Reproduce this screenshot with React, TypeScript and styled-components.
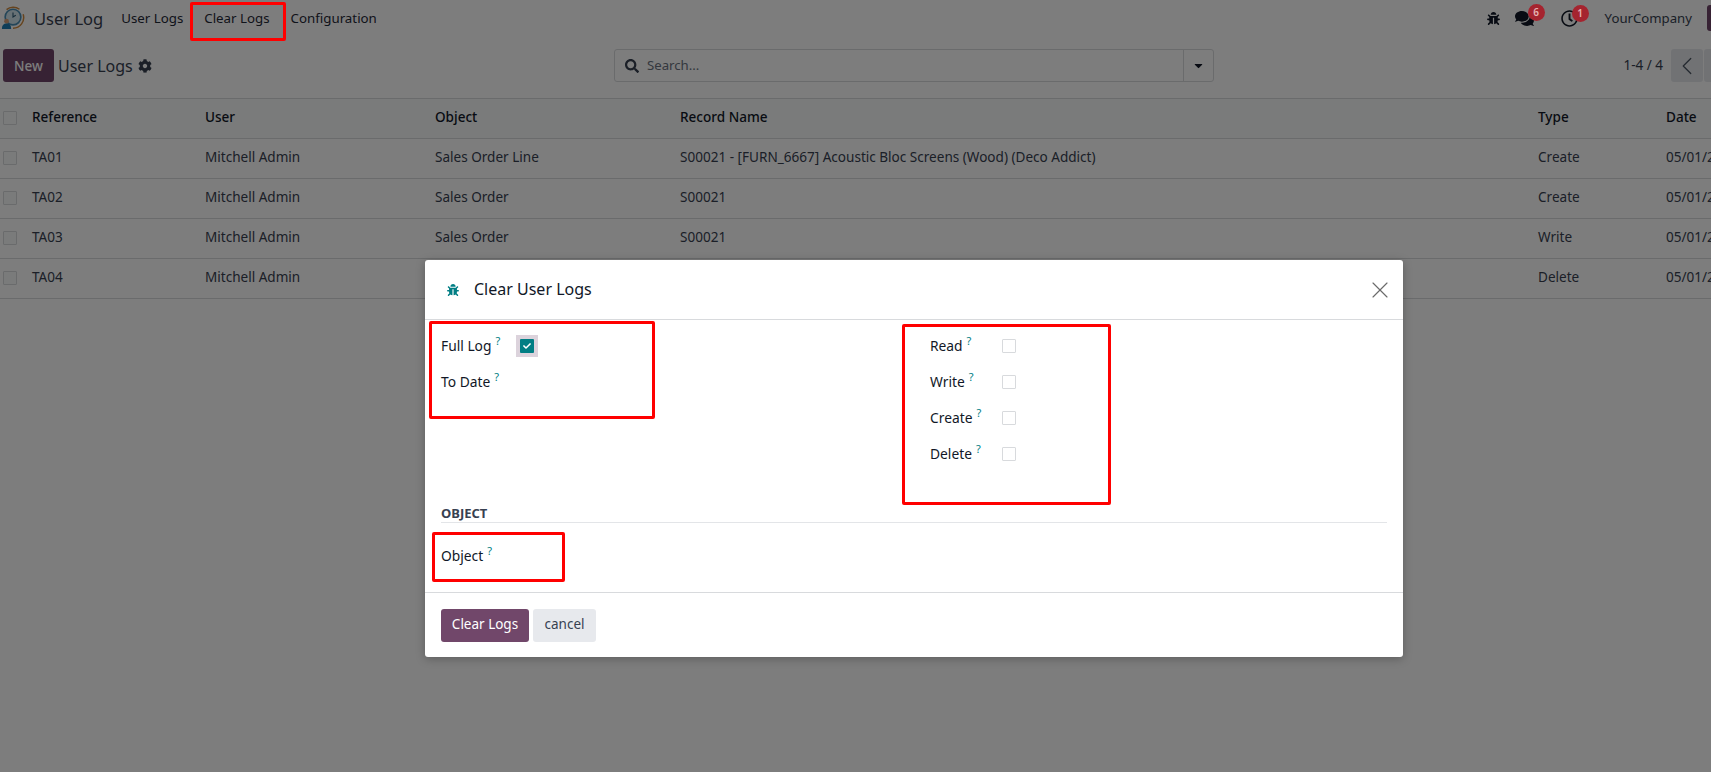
import React from 'react';
import styled, { createGlobalStyle } from 'styled-components';
import { FaBug, FaCaretDown, FaCheck, FaCog, FaComments, FaRegClock, FaSearch } from 'react-icons/fa';
import { LuChevronLeft, LuX } from 'react-icons/lu';

const rows = [
  { ref: 'TA01', object: 'Sales Order Line', record: 'S00021 - [FURN_6667] Acoustic Bloc Screens (Wood) (Deco Addict)', type: 'Create' },
  { ref: 'TA02', object: 'Sales Order', record: 'S00021', type: 'Create' },
  { ref: 'TA03', object: 'Sales Order', record: 'S00021', type: 'Write' },
  { ref: 'TA04', object: 'Sales Order', record: 'S00021', type: 'Delete' },
];

const COLUMNS = '32px 173px 230px 245px 858px 128px 1fr';

export default function App() {
  return (
    <Page>
      <GlobalStyle />
      <NavBar>
        <Logo />
        <AppName>User Log</AppName>
        <NavItem>User Logs</NavItem>
        <NavItem>
          Clear Logs
          <NavMark />
        </NavItem>
        <NavItem>Configuration</NavItem>
        <NavRight>
          <BugIcon />
          <Indicator>
            <FaComments size={19} color="#111827" />
            <Badge>6</Badge>
          </Indicator>
          <Indicator>
            <FaRegClock size={17} color="#111827" />
            <Badge>1</Badge>
          </Indicator>
          <Company>YourCompany</Company>
          <Avatar />
        </NavRight>
      </NavBar>

      <ControlPanel>
        <PanelLeft>
          <NewButton>New</NewButton>
          <Breadcrumb>User Logs</Breadcrumb>
          <FaCog size={14} color="#374151" />
        </PanelLeft>
        <SearchBox>
          <FaSearch size={14} color="#374151" />
          <SearchText>Search...</SearchText>
          <SearchCaret>
            <FaCaretDown size={13} color="#111827" />
          </SearchCaret>
        </SearchBox>
        <Pager>
          <PagerText>1-4 / 4</PagerText>
          <PagerButton>
            <LuChevronLeft size={30} color="#4b5563" strokeWidth={1} />
          </PagerButton>
          <PagerButton />
        </Pager>
      </ControlPanel>

      <Table>
        <HeadRow>
          <CheckCell><Check /></CheckCell>
          <Cell>Reference</Cell>
          <Cell>User</Cell>
          <Cell>Object</Cell>
          <Cell>Record Name</Cell>
          <Cell>Type</Cell>
          <Cell>Date</Cell>
        </HeadRow>
        {rows.map((row) => (
          <BodyRow key={row.ref}>
            <CheckCell><Check /></CheckCell>
            <Cell>{row.ref}</Cell>
            <Cell>Mitchell Admin</Cell>
            <Cell>{row.object}</Cell>
            <Cell>{row.record}</Cell>
            <Cell>{row.type}</Cell>
            <Cell>05/01/2024</Cell>
          </BodyRow>
        ))}
      </Table>

      <Backdrop />

      <Dialog>
        <DialogHeader>
          <FaBug size={12} color="#017e84" />
          <DialogTitle>Clear User Logs</DialogTitle>
          <CloseIcon>
            <LuX size={28} strokeWidth={1} />
          </CloseIcon>
        </DialogHeader>

        <DialogBody>
          <FieldColumns>
            <FieldColumn $labelWidth={79}>
              <Field>
                <FieldLabel>Full Log<Help>?</Help></FieldLabel>
                <FocusRing>
                  <CheckedBox><FaCheck size={8} color="#fff" /></CheckedBox>
                </FocusRing>
              </Field>
              <Field>
                <FieldLabel>To Date<Help>?</Help></FieldLabel>
              </Field>
            </FieldColumn>
            <FieldColumn $labelWidth={72}>
              {['Read', 'Write', 'Create', 'Delete'].map((name) => (
                <Field key={name}>
                  <FieldLabel>{name}<Help>?</Help></FieldLabel>
                  <FormCheck />
                </Field>
              ))}
            </FieldColumn>
          </FieldColumns>

          <SectionTitle>OBJECT</SectionTitle>
          <ObjectFields $labelWidth={79}>
            <Field>
              <FieldLabel>Object<Help>?</Help></FieldLabel>
            </Field>
          </ObjectFields>
        </DialogBody>

        <DialogFooter>
          <PrimaryButton>Clear Logs</PrimaryButton>
          <SecondaryButton>cancel</SecondaryButton>
        </DialogFooter>

        <Mark $left={4} $top={61} $width={226} $height={98} />
        <Mark $left={477} $top={64} $width={209} $height={181} />
        <Mark $left={7} $top={272} $width={133} $height={50} />
      </Dialog>
    </Page>
  );
}

function Logo() {
  return (
    <LogoSvg viewBox="0 0 26 26">
      <path d="M6 4a11.5 11.5 0 0 1 14-.5" fill="none" stroke="#d08a3c" strokeWidth="1.6" />
      <path d="M24 9a11.5 11.5 0 0 1-11 15" fill="none" stroke="#d08a3c" strokeWidth="1.6" />
      <circle cx="13" cy="12" r="8.5" fill="#d3e6ef" stroke="#4b8fb5" strokeWidth="1.8" />
      <path d="M13 7v5l3-2" fill="none" stroke="#2d5a75" strokeWidth="1.2" />
      <circle cx="6" cy="16.5" r="2.6" fill="#d9a27a" />
      <path d="M1 25c0-4 1.5-6 5-6s5 2 5 6z" fill="#1f7fb5" />
    </LogoSvg>
  );
}

const GlobalStyle = createGlobalStyle`
  html, body {
    margin: 0;
    padding: 0;
    height: 100%;
    background: #fff;
  }
`;

const Page = styled.div`
  position: relative;
  width: 1711px;
  height: 772px;
  overflow: hidden;
  background: #fff;
  color: #374151;
  font-family: 'Noto Sans', 'Open Sans', sans-serif;
  font-size: 13px;
`;

const NavBar = styled.header`
  display: flex;
  align-items: center;
  height: 36px;
  padding-left: 1px;
`;

const LogoSvg = styled.svg`
  width: 24px;
  height: 26px;
  flex-shrink: 0;
`;

const AppName = styled.span`
  margin-left: 9px;
  margin-right: 18px;
  font-size: 16.5px;
  color: #374151;
`;

const NavItem = styled.span`
  position: relative;
  margin-right: 21px;
  font-size: 13.3px;
  color: #1f2937;
`;

const NavMark = styled.span`
  position: absolute;
  left: -14px;
  top: -7px;
  width: 96px;
  height: 39px;
  box-sizing: border-box;
  border: 3px solid #ff0000;
  border-radius: 2px;
  z-index: 30;
`;

const NavRight = styled.div`
  display: flex;
  align-items: center;
  margin-left: auto;
`;

const BugIcon = styled(FaBug)`
  width: 13px;
  height: 13px;
  color: #111827;
  margin-right: 15px;
`;

const Indicator = styled.span`
  position: relative;
  display: flex;
  margin-right: 27px;
`;

const Badge = styled.span`
  position: absolute;
  right: -11px;
  top: -5px;
  width: 17px;
  height: 17px;
  border-radius: 50%;
  background: #a5242f;
  color: #e6b4b4;
  font-size: 10px;
  font-weight: 600;
  line-height: 17px;
  text-align: center;
  z-index: 15;
`;

const Company = styled.span`
  font-size: 13.2px;
  color: #374151;
`;

const Avatar = styled.span`
  width: 16px;
  height: 26px;
  margin-left: 15px;
  margin-right: -12px;
  border-radius: 3px;
  background: #71476a;
`;

const ControlPanel = styled.section`
  display: grid;
  grid-template-columns: 611px 600px 1fr;
  align-items: center;
  height: 63px;
  padding: 0 0 0 3px;
  border-bottom: 1px solid #d8dadd;
  box-sizing: border-box;
`;

const PanelLeft = styled.div`
  display: flex;
  align-items: center;
  gap: 4px;
  margin-top: -3px;
`;

const NewButton = styled.button`
  width: 51px;
  height: 33px;
  padding: 0;
  border: 0;
  border-radius: 3px;
  background: #71476a;
  color: #fff;
  font: 500 13.5px 'Noto Sans', sans-serif;
`;

const Breadcrumb = styled.span`
  font-size: 16px;
  color: #374151;
  margin-right: 1px;
`;

const SearchBox = styled.div`
  display: flex;
  align-items: center;
  height: 33px;
  margin-top: -3px;
  padding-left: 10px;
  border: 1px solid #d8dadd;
  border-radius: 3px;
  box-sizing: border-box;
`;

const SearchText = styled.span`
  margin-left: 8px;
  padding-bottom: 1px;
  color: #6b7280;
  font-size: 13.2px;
`;

const SearchCaret = styled.span`
  display: flex;
  align-items: center;
  justify-content: center;
  width: 29px;
  height: 100%;
  margin-left: auto;
  border-left: 1px solid #d8dadd;
`;

const Pager = styled.div`
  display: flex;
  align-items: center;
  justify-content: flex-end;
  gap: 1px;
  margin-top: -3px;
  margin-right: -25px;
`;

const PagerText = styled.span`
  margin-right: 7px;
  padding-bottom: 1px;
  font-size: 13.5px;
  color: #374151;
`;

const PagerButton = styled.span`
  display: flex;
  align-items: center;
  justify-content: center;
  width: 32px;
  height: 33px;
  border-radius: 3px;
  background: #e7e9ed;
`;

const Table = styled.section`
  display: flex;
  flex-direction: column;
`;

const HeadRow = styled.div`
  display: grid;
  grid-template-columns: ${COLUMNS};
  align-items: center;
  height: 40px;
  background: #f9fafb;
  border-bottom: 1px solid #d8dadd;
  box-sizing: border-box;
  color: #111827;
  font-weight: 500;
`;

const BodyRow = styled(HeadRow)`
  background: #fff;
  color: #374151;
  font-weight: 400;
`;

const Cell = styled.span`
  display: flex;
  align-items: center;
  white-space: nowrap;
  padding-bottom: 3px;
  font-size: 13.55px;
`;

const CheckCell = styled(Cell)`
  padding-bottom: 2px;
  padding-left: 3px;
`;

const Check = styled.span`
  display: inline-block;
  width: 14px;
  height: 14px;
  box-sizing: border-box;
  border: 1px solid #d8dadd;
  border-radius: 1px;
  background: #f9fafb;
`;

const FormCheck = styled(Check)`
  align-self: center;
  background: #fff;
`;

const Backdrop = styled.div`
  position: absolute;
  inset: 0;
  background: rgba(0, 0, 0, 0.51);
  z-index: 10;
`;

const Dialog = styled.div`
  position: absolute;
  left: 425px;
  top: 260px;
  width: 978px;
  height: 397px;
  display: flex;
  flex-direction: column;
  background: #fff;
  border-radius: 3px;
  box-shadow: 0 2px 10px rgba(0, 0, 0, 0.25);
  z-index: 20;
`;

const DialogHeader = styled.div`
  display: flex;
  align-items: center;
  height: 60px;
  flex-shrink: 0;
  padding: 0 16px 0 22px;
  border-bottom: 1px solid #d8dadd;
  box-sizing: border-box;
`;

const DialogTitle = styled.h4`
  margin: 0 0 0 15px;
  padding-bottom: 2px;
  font-size: 16px;
  font-weight: 400;
  color: #111827;
`;

const CloseIcon = styled.span`
  display: flex;
  margin-left: auto;
  margin-right: -7px;
  color: #6b6b6b;
`;

const DialogBody = styled.div`
  flex: 1;
  padding: 8px 16px 0;
`;

const FieldColumns = styled.div`
  display: grid;
  grid-template-columns: 489px 1fr;
`;

const FieldColumn = styled.div<{ $labelWidth: number }>`
  display: grid;
  grid-template-columns: ${(p) => p.$labelWidth}px 1fr;
  grid-auto-rows: 36px;
`;

const ObjectFields = styled(FieldColumn)`
  padding-top: 15px;
`;

const Field = styled.div`
  display: contents;
`;

const FieldLabel = styled.label`
  align-self: center;
  padding-bottom: 2px;
  font-size: 13.8px;
  font-weight: 400;
  color: #111827;
`;

const Help = styled.sup`
  margin-left: 4px;
  font-size: 11px;
  color: #017e84;
  line-height: 0;
`;

const FocusRing = styled.span`
  align-self: center;
  justify-self: start;
  display: flex;
  align-items: center;
  justify-content: center;
  width: 22px;
  height: 22px;
  margin-left: -4px;
  background: #dcd3dc;
`;

const CheckedBox = styled.span`
  display: flex;
  align-items: center;
  justify-content: center;
  width: 14px;
  height: 14px;
  border-radius: 1px;
  background: #017e84;
`;

const SectionTitle = styled.h5`
  margin: 32px 0 0;
  border-bottom: 1px solid #e3e5e8;
  font-size: 13px;
  font-weight: 700;
  line-height: 18px;
  color: #374151;
`;

const DialogFooter = styled.div`
  display: flex;
  align-items: center;
  gap: 4px;
  height: 65px;
  flex-shrink: 0;
  padding: 0 16px;
  border-top: 1px solid #d8dadd;
  box-sizing: border-box;
`;

const PrimaryButton = styled.button`
  width: 88px;
  height: 33px;
  padding: 0 0 2px;
  border: 0;
  border-radius: 3px;
  background: #71476a;
  color: #fff;
  font: 400 13.5px 'Noto Sans', sans-serif;
`;

const SecondaryButton = styled(PrimaryButton)`
  width: 63px;
  background: #e7e9ed;
  color: #374151;
`;

const Mark = styled.span<{ $left: number; $top: number; $width: number; $height: number }>`
  position: absolute;
  left: ${(p) => p.$left}px;
  top: ${(p) => p.$top}px;
  width: ${(p) => p.$width}px;
  height: ${(p) => p.$height}px;
  box-sizing: border-box;
  border: 3px solid #ff0000;
  border-radius: 2px;
`;
